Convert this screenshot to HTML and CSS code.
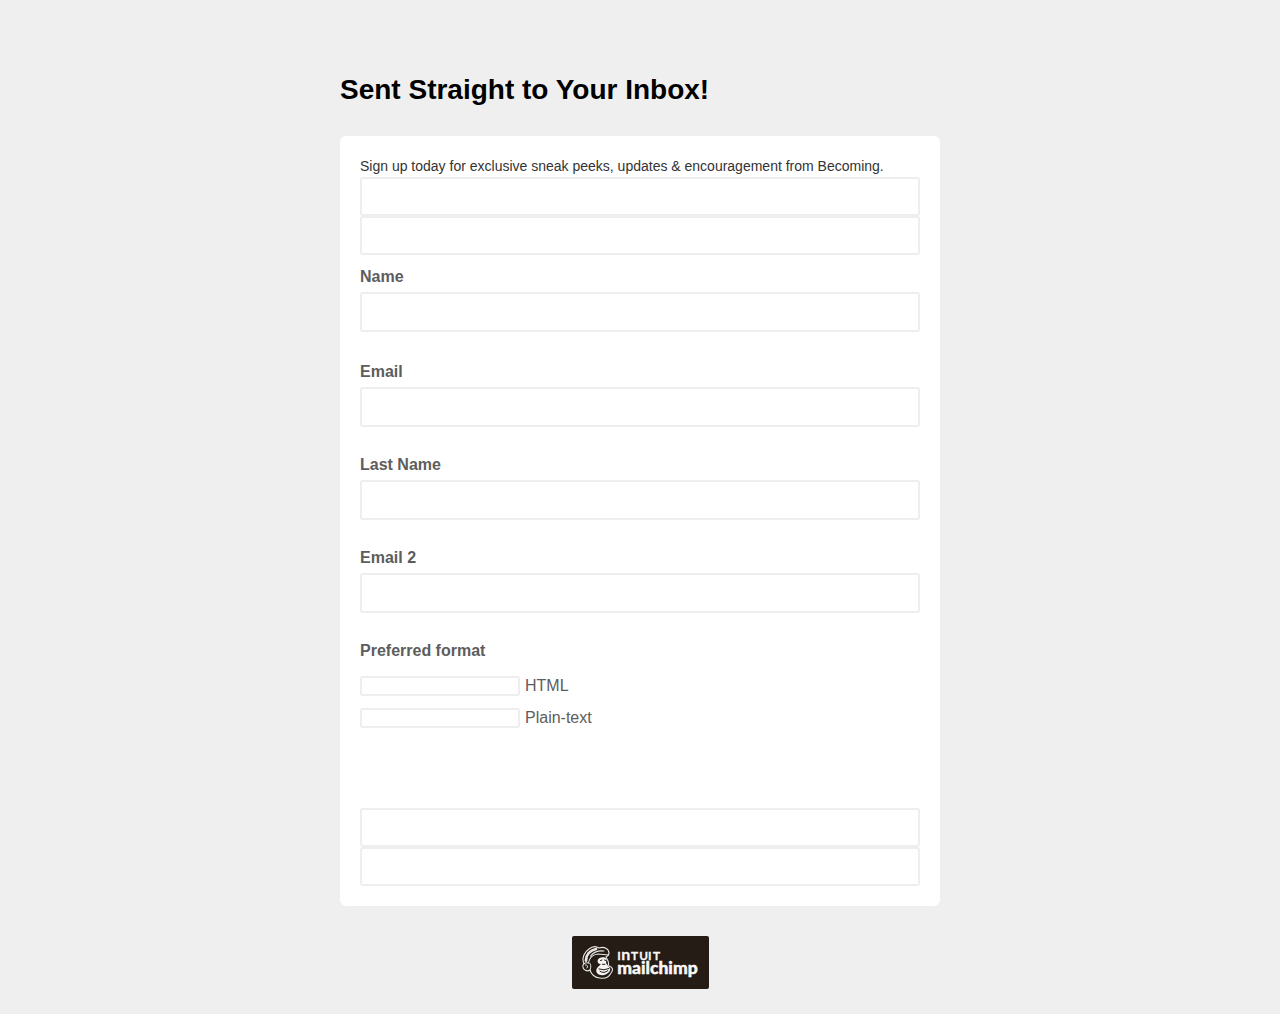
FILE: index.html
```html
<!DOCTYPE html>
<html lang="en">
<head>
<meta charset="utf-8">
<title>Sent Straight to Your Inbox!</title>
<link rel="stylesheet" href="styles.css">
</head>
<body>
<main class="page">
  <h1 class="title">Sent Straight to Your Inbox!</h1>
  <form class="card">
    <p class="intro">Sign up today for exclusive sneak peeks, updates &amp; encouragement from Becoming.</p>
    <input class="input input-plain" type="text" aria-label="First entry">
    <input class="input input-plain" type="text" aria-label="Second entry">
    <div class="field field-first">
      <label class="label" for="name">Name</label>
      <input class="input" id="name" type="text">
    </div>
    <div class="field">
      <label class="label" for="email">Email</label>
      <input class="input" id="email" type="text">
    </div>
    <div class="field">
      <label class="label" for="last">Last Name</label>
      <input class="input" id="last" type="text">
    </div>
    <div class="field">
      <label class="label" for="email2">Email 2</label>
      <input class="input" id="email2" type="text">
    </div>
    <div class="formats">
      <span class="label">Preferred format</span>
      <label class="option"><input class="input input-small" type="text">HTML</label>
      <label class="option"><input class="input input-small" type="text">Plain-text</label>
    </div>
    <input class="input input-plain" type="text" aria-label="Third entry">
    <input class="input input-plain" type="text" aria-label="Fourth entry">
  </form>
  <a class="badge" href="#">
    <svg width="137" height="53" viewBox="0 0 137 53" role="img" aria-label="Intuit Mailchimp">
      <g fill="none" stroke="#e9e7e4" stroke-linecap="round" stroke-linejoin="round">
        <path stroke-width="1.1" d="M11.5 27C9.5 22 12.5 16 17 13C20 10.5 24 10 27 12C32 10 37 13 37 17C37 19 36 20 34 21L36 25C37 27 36 28 37 30C41 31 41.5 34 39 37C37 41 33 43 28 42C23 42 19 38 18 34C15 36 11 34 10.8 30.5C10.8 28 13 26 16 27"/>
        <path stroke-width="1.1" d="M16.5 27C17.5 21 21 18.5 26 18L36.5 19M18.5 20C22 15.5 27 14.5 32 15"/>
        <path stroke-width="2.8" d="M14 24.5C14 19 18 14.5 24 13"/>
        <path stroke-width="1" d="M13.5 29Q17 29 15 32M17.5 27Q20 29 18 34"/>
      </g>
      <path fill="#f5f4f2" d="M26 23.5C28 20.5 33.5 20.5 34.5 23L34 27L37 31C40 33 37 38 32 39C27 40 22.5 37 25 32L29 28C26 28 25 26 26 23.5Z"/>
      <g fill="none" stroke="#241c15" stroke-width="1" stroke-linecap="round">
        <path d="M28.5 24.5L30 24M32.5 24L34 24.5M30.5 28.3H33M27 33Q32 35 37 32.5M28 35.3Q32 38 36 34.5"/>
      </g>
      <g class="wordmark" fill="#f8f7f5">
        <text class="intuit" y="23.8"><tspan x="45.2">I</tspan><tspan class="arch" x="49.2">n</tspan><tspan x="59">T</tspan><tspan x="67.2">U</tspan><tspan x="76">I</tspan><tspan x="81">T</tspan></text>
        <text class="mailchimp" x="45.2" y="37.5" textLength="80.5" lengthAdjust="spacingAndGlyphs">mailchimp</text>
      </g>
    </svg>
  </a>
</main>
</body>
</html>
```
FILE: styles.css
```css
* { box-sizing: border-box; }

body {
  margin: 0;
  background: #efefef;
  font-family: "Liberation Sans", Arial, sans-serif;
}

.page {
  width: 600px;
  margin: 0 auto;
  padding-top: 69px;
}

.title {
  margin: 0 0 25px;
  font-size: 28px;
  line-height: 42px;
  color: #000;
}

.card {
  height: 770px;
  padding: 20px;
  border-radius: 6px;
  background: #fff;
}

.intro {
  margin: 0;
  font-size: 14px;
  line-height: 21px;
  color: #333;
}

.input {
  display: block;
  width: 100%;
  height: 40px;
  margin: 0;
  padding: 0 8px;
  border: 2px solid #eee;
  border-radius: 3px;
  background: #fff;
  font: inherit;
}

.input-plain { height: 39px; }

.field { padding-bottom: 25px; }

.field-first {
  padding-top: 9px;
  padding-bottom: 27px;
}

.label {
  display: block;
  margin-bottom: 2px;
  font-size: 16px;
  font-weight: bold;
  line-height: 26px;
  color: #5d5d5d;
}

.formats { padding-bottom: 80px; }

.option {
  display: flex;
  gap: 5px;
  margin-top: 12px;
  font-size: 16px;
  line-height: 20px;
  color: #5d5d5d;
}

.formats .label { margin-bottom: 12px; }
.formats .label + .option { margin-top: 0; }

.input-small {
  width: 160px;
  height: 20px;
}

.badge {
  display: block;
  width: 137px;
  height: 53px;
  margin: 30px auto 0;
  position: relative;
  left: 0.5px;
  border-radius: 2px;
  background: #241c15;
}

.badge svg { display: block; }

.intuit {
  font: 700 11.8px Lato, sans-serif;
  stroke: #f8f7f5;
  stroke-width: 0.3px;
}

.arch { font-size: 16px; }

.mailchimp {
  font: 900 16px Lato, sans-serif;
  stroke: #f8f7f5;
  stroke-width: 0.4px;
}
```
